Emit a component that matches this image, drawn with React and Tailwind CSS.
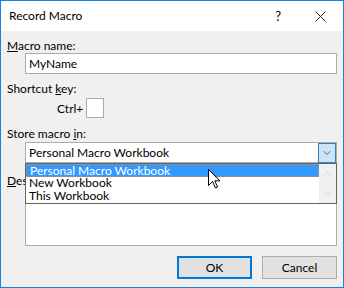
import { ChevronDown, ChevronUp } from 'lucide-react'

const font = { fontFamily: 'Lato, "Noto Sans", sans-serif' }

const Label = ({ children, className = '' }) => (
  <div className={`text-[12px] leading-[15px] text-black ${className}`}>{children}</div>
)

const Cursor = () => (
  <svg className="absolute left-[182px] top-[5px]" width="13" height="20" viewBox="0 0 13 20">
    <path
      d="M0.5 0.5 L0.5 16.5 L4.5 12.5 L7.5 19 L9.5 18 L6.8 11.8 L12 11.8 Z"
      fill="white"
      stroke="black"
      strokeWidth="1"
      strokeLinejoin="miter"
    />
  </svg>
)

const App = () => {
  const items = ['Personal Macro Workbook', 'New Workbook', 'This Workbook']

  return (
    <div
      className="flex h-[288px] w-[344px] flex-col border border-[#1883d7] bg-[#f0f0f0] text-black"
      style={font}
    >
      {/* title bar */}
      <div className="flex h-[30px] items-center bg-white">
        <span className="ml-[8px] text-[12px] leading-[16px]">Record Macro</span>
        <span className="ml-auto mr-[34px] text-[13px] leading-[16px]">?</span>
        <svg className="mr-[17px]" width="11" height="11" viewBox="0 0 11 11">
          <path d="M0.5 0.5 L10.5 10.5 M10.5 0.5 L0.5 10.5" stroke="#222" strokeWidth="1" />
        </svg>
      </div>

      <div className="flex flex-1 flex-col px-[6px] pt-[7px]">
        <Label>
          <span className="underline">M</span>acro name:
        </Label>
        <div className="ml-[18px] flex h-[21px] items-center border border-[#acacac] bg-white pl-[3px] text-[12px]">
          MyName
        </div>

        <Label className="mt-[7px]">
          Shortcut <span className="underline">k</span>ey:
        </Label>
        <div className="mt-[2px] flex items-center">
          <span className="ml-[50px] text-[12px] leading-[15px]">Ctrl+</span>
          <div className="ml-[3px] h-[20px] w-[18px] border border-[#acacac] bg-white" />
        </div>

        <Label className="mt-[8px]">
          Store macro <span className="underline">i</span>n:
        </Label>
        <div className="relative ml-[18px] mt-[1px]">
          <div className="flex h-[21px] items-center border border-[#acacac] bg-white">
            <span className="pl-[3px] text-[12px]">Personal Macro Workbook</span>
            <div className="ml-auto flex h-[20px] w-[18px] items-center justify-center border border-[#3c7fb1] bg-[#cce4f7]">
              <ChevronDown size={12} strokeWidth={1.5} color="#444" />
            </div>
          </div>

          <div className="absolute left-0 right-0 top-[21px] z-10 flex h-[41px] border border-[#646464] bg-white">
            <div className="relative flex flex-1 flex-col">
              {items.map((item, i) => (
                <div
                  key={item}
                  className={`h-[13px] pl-[3px] text-[12px] leading-[12px] ${
                    i === 0 ? 'border border-dotted border-[#d08a3a] bg-[#3399ff] pl-[2px] text-white' : ''
                  }`}
                >
                  {item}
                </div>
              ))}
              <Cursor />
            </div>
            <div className="flex w-[17px] flex-col items-center justify-between bg-[#f0f0f0] py-[4px]">
              <ChevronUp size={11} strokeWidth={1.5} color="#c4c4c4" />
              <ChevronDown size={11} strokeWidth={1.5} color="#c4c4c4" />
            </div>
          </div>
        </div>

        <Label className="mt-[10px]">
          <span className="underline">D</span>escription:
        </Label>
        <div className="ml-[18px] h-[58px] border border-[#acacac] bg-white" />

        <div className="mt-[10px] flex justify-end gap-[10px]">
          <button
            type="button"
            className="h-[23px] w-[75px] border-2 border-[#0078d7] bg-[#e1e1e1] text-[12px]"
          >
            OK
          </button>
          <button
            type="button"
            className="h-[23px] w-[75px] border border-[#adadad] bg-[#e1e1e1] text-[12px]"
          >
            Cancel
          </button>
        </div>
      </div>
    </div>
  )
}

export default App
